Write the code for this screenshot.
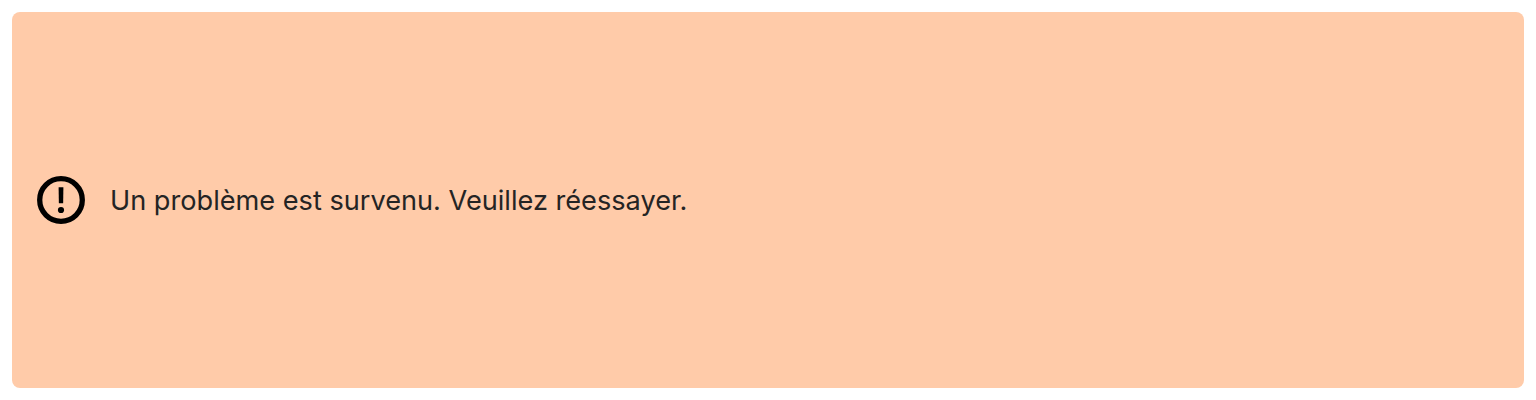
<main class="page">
  <div class="alert" role="alert">
    <svg class="icon" viewBox="0 0 48 48" aria-hidden="true">
      <circle cx="24" cy="24" r="21.3" fill="none" stroke="#000" stroke-width="5.3" />
      <path d="M21.6 11.2h4.8l-.25 16.1h-4.3z" />
      <circle cx="24" cy="34" r="3.1" />
    </svg>
    <p>Un problème est survenu. Veuillez réessayer.</p>
  </div>
</main>

<style>
  :global(body) { margin: 0; background: #fff; }
  .page { box-sizing: border-box; height: 400px; padding: 12px; }
  .alert {
    box-sizing: border-box;
    height: 100%;
    display: flex;
    align-items: center;
    gap: 25px;
    padding: 0 25px;
    border-radius: 8px;
    background: #ffcba9;
  }
  .icon { width: 48px; height: 48px; flex: none; }
  p {
    margin: 0;
    padding-top: 1px;
    color: #242424;
    font: 400 27.15px/40px Inter, sans-serif;
    white-space: nowrap;
  }
</style>
